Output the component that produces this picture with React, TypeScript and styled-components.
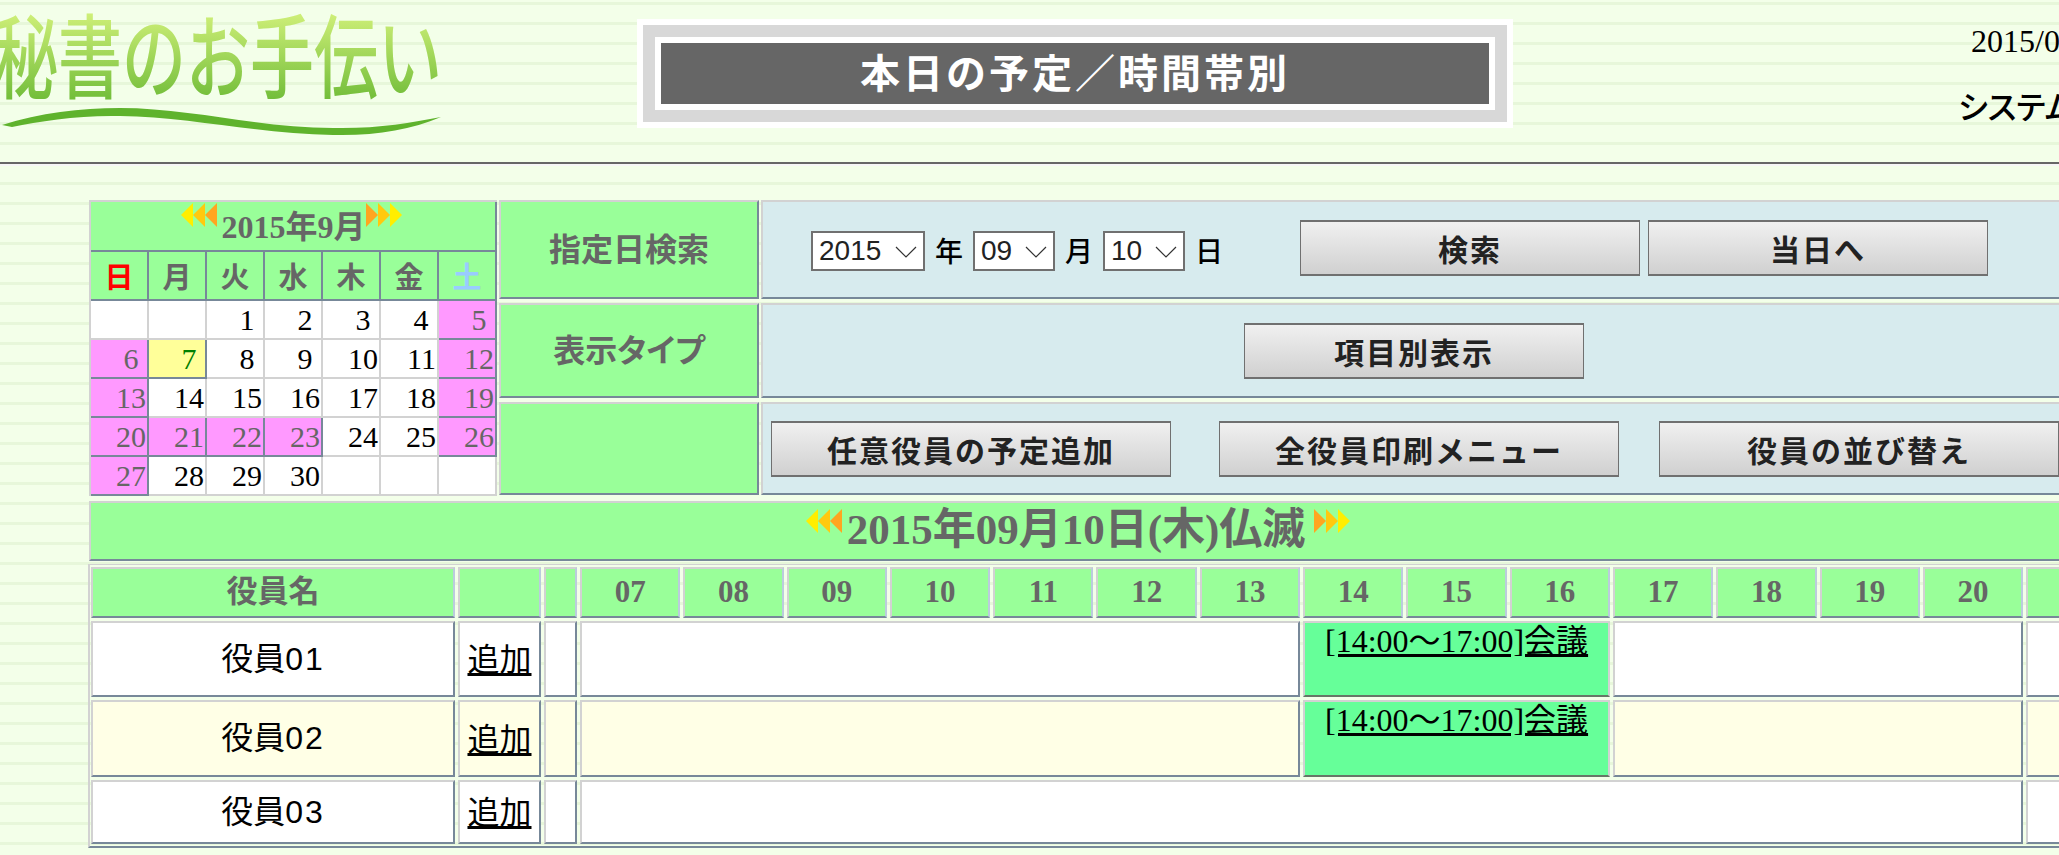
import React from "react";
import styled, { createGlobalStyle } from "styled-components";

const LIGHT = "#d2d2d2";
const SLATE = "#778899";
const GREEN = "#99ff99";
const GRAY = "#666666";
const SERIF = `"Liberation Serif", "Noto Sans CJK JP", serif`;
const GOTHIC = `"Noto Sans CJK JP", "Liberation Sans", sans-serif`;

const Global = createGlobalStyle`
  html, body { margin: 0; padding: 0; overflow: hidden; width: 2059px; height: 855px; }
  body {
    background-color: #f3ffe9;
    background-image: linear-gradient(to bottom, #e7f7da 0, #e7f7da 3px, #f3ffe9 3px, #f3ffe9 20px);
    background-size: 100% 20px;
    background-position: 0 2px;
    font-family: ${SERIF};
    color: #000;
  }
`;

const Page = styled.div`
  width: 2059px;
  height: 855px;
  overflow: hidden;
`;

const Header = styled.header`
  width: 2200px;
  height: 164px;
  box-sizing: border-box;
  border-bottom: 2px solid #666;
  display: flex;
  align-items: flex-start;
  box-shadow: 0 2px 0 #f6f6f6;
`;

const Logo = styled.svg`
  width: 637px;
  height: 162px;
  flex: none;
  display: block;
`;

const TitleFrame = styled.div`
  width: 876px;
  height: 109px;
  margin-top: 19px;
  flex: none;
  box-sizing: border-box;
  border: 6px solid #fff;
  background: #d8d8d8;
  padding: 12px;
`;

const TitleInner = styled.h1`
  margin: 0;
  height: 73px;
  box-sizing: border-box;
  border: 6px solid #fff;
  background: ${GRAY};
  color: #fff;
  font: 700 40px/57px ${GOTHIC};
  letter-spacing: 3px;
  text-align: center;
`;

const Info = styled.div`
  flex: none;
  margin-left: 445px;
  padding-top: 19px;
`;

const DateLine = styled.div`
  margin-left: 13px;
  font: 32px/44px ${SERIF};
  white-space: nowrap;
`;

const UserLine = styled.div`
  margin-top: 20px;
  font: 500 32px/44px ${GOTHIC};
  font-feature-settings: "palt";
  white-space: nowrap;
`;

const Main = styled.main`
  width: 1978px;
  margin: 36px 0 0 89px;
`;

const Top = styled.div`
  display: flex;
  gap: 2px;
`;

const Calendar = styled.div`
  width: 408px;
  flex: none;
  box-sizing: border-box;
  display: grid;
  grid-template-columns: repeat(7, 58px);
  grid-template-rows: 50px 49px repeat(5, 39px);
  border-top: 2px solid ${LIGHT};
  border-left: 2px solid ${LIGHT};
`;

const CalTitle = styled.div`
  grid-column: 1 / -1;
  background: ${GREEN};
  border-right: 2px solid ${SLATE};
  border-bottom: 2px solid ${SLATE};
  display: flex;
  justify-content: center;
  align-items: flex-start;
  padding-top: 1px;
  color: ${GRAY};
  font: 700 32px/46px ${SERIF};
`;

const CalTitleText = styled.span`
  margin: 1px 0 0 1px;
`;

const CalArrow = styled.span`
  flex: none;
  margin-left: -3px;
  margin-right: 3px;
`;

const WeekHead = styled.div<{ $color: string }>`
  background: ${GREEN};
  color: ${(p) => p.$color};
  border-right: 2px solid ${SLATE};
  border-bottom: 2px solid ${SLATE};
  font: 700 29px/47px ${GOTHIC};
  text-align: center;
`;

const dayBg = { blank: "#fff", plain: "#fff", holiday: "#ff99ff", today: "#ffff99" };
const dayFg = { blank: "#000", plain: "#000", holiday: GRAY, today: "#008000" };

const DayCell = styled.div<{ $kind: keyof typeof dayBg }>`
  background: ${(p) => dayBg[p.$kind]};
  color: ${(p) => dayFg[p.$kind]};
  border-right: 2px solid ${(p) => (p.$kind === "holiday" || p.$kind === "today" ? SLATE : LIGHT)};
  border-bottom: 2px solid ${(p) => (p.$kind === "holiday" || p.$kind === "today" ? SLATE : LIGHT)};
  font: 30px/37px ${SERIF};
  text-align: right;
  padding-right: 1px;
  white-space: pre;
`;

const ArrowSvg = styled.svg`
  width: 36px;
  height: 24px;
  flex: none;
  display: block;
`;

const Panels = styled.div`
  flex: 1;
  display: grid;
  grid-template-columns: 260px 1fr;
  grid-template-rows: 99px 95px 93px;
  column-gap: 2px;
  row-gap: 4px;
  height: 295px;
`;

const Label = styled.div`
  background: ${GREEN};
  border: 2px solid ${LIGHT};
  border-right-color: ${SLATE};
  border-bottom-color: ${SLATE};
  color: ${GRAY};
  font: 700 32px/1 ${GOTHIC};
  font-feature-settings: "palt";
  padding-bottom: 5px;
  display: flex;
  align-items: center;
  justify-content: center;
  box-sizing: border-box;
`;

const Content = styled.div<{ $align: string }>`
  background: #d7ebee;
  border: 2px solid ${LIGHT};
  border-right-color: ${SLATE};
  border-bottom-color: ${SLATE};
  box-sizing: border-box;
  display: flex;
  align-items: center;
  justify-content: ${(p) => p.$align};
`;

const SearchForm = styled.form`
  display: flex;
  align-items: center;
  margin: 0;
  padding-left: 48px;
`;

const SelectWrap = styled.span<{ $w: number }>`
  position: relative;
  display: block;
  width: ${(p) => p.$w}px;
  height: 40px;
  margin-top: 2px;
`;

const Select = styled.select`
  appearance: none;
  width: 100%;
  height: 100%;
  box-sizing: border-box;
  border: 2px solid #707070;
  border-radius: 0;
  background: #fff;
  color: #222;
  padding: 0 0 0 6px;
  font: 28px/36px "Liberation Sans", sans-serif;
`;

const Chevron = styled.svg`
  position: absolute;
  right: 8px;
  top: 15px;
  width: 22px;
  height: 12px;
  pointer-events: none;
`;

const Unit = styled.span<{ $w: number }>`
  width: ${(p) => p.$w}px;
  text-align: center;
  font: 500 28px/1 ${GOTHIC};
  flex: none;
`;

const Button = styled.button<{ $w: number }>`
  width: ${(p) => p.$w}px;
  height: 56px;
  flex: none;
  box-sizing: border-box;
  border: 1px solid #707070;
  border-top-width: 2px;
  border-bottom-width: 2px;
  background: linear-gradient(to bottom, #f0f0f0, #d0d0d0);
  color: #222;
  font: 700 30px/1 ${GOTHIC};
  letter-spacing: 2px;
  padding: 0;
`;

const SearchButtons = styled.div`
  display: flex;
  gap: 8px;
  margin-left: 67px;
  margin-top: -4px;
`;

const ActionRow = styled.div`
  display: flex;
  padding-left: 8px;
  gap: 40px;
  > :first-child {
    margin-right: 8px;
  }
`;

const DateBar = styled.div`
  margin-top: 5px;
  height: 60px;
  box-sizing: border-box;
  background: ${GREEN};
  border: 2px solid ${LIGHT};
  border-right-color: ${SLATE};
  border-bottom-color: ${SLATE};
  display: flex;
  justify-content: center;
  align-items: flex-start;
  color: ${GRAY};
  font: 700 43px/53px ${SERIF};
`;

const DateArrow = styled.span`
  margin-top: 6px;
  flex: none;
`;

const DateText = styled.span`
  margin: 0 9px 0 5px;
`;

const Schedule = styled.div`
  margin-top: 3px;
  margin-left: -1px;
  width: 1980px;
  box-sizing: border-box;
  height: 284px;
  border-left: 2px solid ${LIGHT};
  border-top: 1px solid ${LIGHT};
  border-bottom: 2px solid ${SLATE};
  padding: 2px 0 0 1px;
  display: grid;
  grid-template-columns: 364px 83px 33px repeat(14, 100.3px) 42px;
  grid-template-rows: 51px 76px 77px 64px;
  gap: 3px;
`;

const HeadCell = styled.div`
  background: ${GREEN};
  border: 2px solid ${LIGHT};
  border-bottom-color: ${SLATE};
  border-right-color: #bcd;
  box-sizing: border-box;
  color: ${GRAY};
  font: 700 31px/45px ${SERIF};
  text-align: center;
`;

const RowCell = styled.div<{ $alt?: boolean; $span?: number }>`
  background: ${(p) => (p.$alt ? "#ffffe6" : "#fff")};
  border: 2px solid ${LIGHT};
  border-bottom-color: ${SLATE};
  border-right-color: ${SLATE};
  box-sizing: border-box;
  grid-column: span ${(p) => p.$span ?? 1};
  font: 32px/1 ${GOTHIC};
  padding-bottom: 4px;
  display: flex;
  align-items: center;
  justify-content: center;
`;

const NameDigits = styled.span`
  font-family: "Liberation Sans", sans-serif;
  letter-spacing: 2px;
`;

const Link = styled.a`
  color: #000;
  text-decoration: underline;
`;

const EventCell = styled.div`
  grid-column: span 3;
  background: #66ff99;
  border: 2px solid ${LIGHT};
  border-bottom-color: #667766;
  box-sizing: border-box;
  text-align: center;
  font: 32px/36px ${SERIF};
`;

const Arrows = ({ dir }: { dir: "left" | "right" }) => {
  const colors = ["#ffee00", "#ffc90e", "#ffa520"];
  return (
    <ArrowSvg viewBox="0 0 36 24">
      {colors.map((c, i) =>
        dir === "left" ? (
          <polygon key={c} points={`${i * 12},12 ${i * 12 + 12},0 ${i * 12 + 12},24`} fill={c} />
        ) : (
          <polygon key={c} points={`${36 - i * 12},12 ${24 - i * 12},0 ${24 - i * 12},24`} fill={c} />
        )
      )}
    </ArrowSvg>
  );
};

const Chev = () => (
  <Chevron viewBox="0 0 22 12">
    <path d="M1 1 L11 11 L21 1" fill="none" stroke="#333" strokeWidth="1.2" />
  </Chevron>
);

const weeks: [string, string][] = [
  ["日", "#ff0000"],
  ["月", GRAY],
  ["火", GRAY],
  ["水", GRAY],
  ["木", GRAY],
  ["金", GRAY],
  ["土", "#99ccff"],
];

const holidays = new Set([5, 6, 12, 13, 19, 20, 21, 22, 23, 26, 27]);
const cells: (number | null)[] = [null, null, ...Array.from({ length: 30 }, (_, i) => i + 1), null, null, null];
const hours = ["07", "08", "09", "10", "11", "12", "13", "14", "15", "16", "17", "18", "19", "20"];

const Name = ({ n }: { n: string }) => (
  <span>
    役員<NameDigits>{n}</NameDigits>
  </span>
);

const Add = () => <Link href="#">追加</Link>;

const Event = () => (
  <EventCell>
    <Link href="#">[14:00～17:00]会議</Link>
  </EventCell>
);

export default function App() {
  return (
    <Page>
      <Global />
      <Header>
        <Logo viewBox="0 0 637 162">
          <defs>
            <linearGradient id="logoG" x1="0" y1="0" x2="0" y2="1">
              <stop offset="0" stopColor="#ecff8c" />
              <stop offset="1" stopColor="#5fb32d" />
            </linearGradient>
          </defs>
          <text
            x="-6"
            y="64"
            transform="scale(1 1.42)"
            fontFamily={GOTHIC}
            fontWeight="500"
            fontSize="64"
            fill="url(#logoG)"
          >
            秘書のお手伝い
          </text>
          <path
            d="M2 125 C40 113 80 108 120 108 C190 108 260 128 333 128 C375 129 410 123 441 117 C410 130 375 136 333 135 C260 134 190 117 120 116 C80 115 40 121 12 127 Z"
            fill="#5fb32d"
          />
        </Logo>
        <TitleFrame>
          <TitleInner>本日の予定／時間帯別</TitleInner>
        </TitleFrame>
        <Info>
          <DateLine>2015/09/07</DateLine>
          <UserLine>システム管理者</UserLine>
        </Info>
      </Header>
      <Main>
        <Top>
          <Calendar>
            <CalTitle>
              <CalArrow>
                <Arrows dir="left" />
              </CalArrow>
              <CalTitleText>2015年9月</CalTitleText>
              <Arrows dir="right" />
            </CalTitle>
            {weeks.map(([w, c]) => (
              <WeekHead key={w} $color={c}>
                {w}
              </WeekHead>
            ))}
            {cells.map((d, i) => (
              <DayCell
                key={i}
                $kind={d === null ? "blank" : d === 7 ? "today" : holidays.has(d) ? "holiday" : "plain"}
              >
                {d === null ? "" : d < 10 ? `${d}\u00a0` : d}
              </DayCell>
            ))}
          </Calendar>
          <Panels>
            <Label>指定日検索</Label>
            <Content $align="flex-start">
              <SearchForm>
                <SelectWrap $w={114}>
                  <Select defaultValue="2015">
                    <option>2015</option>
                  </Select>
                  <Chev />
                </SelectWrap>
                <Unit $w={48}>年</Unit>
                <SelectWrap $w={82}>
                  <Select defaultValue="09">
                    <option>09</option>
                  </Select>
                  <Chev />
                </SelectWrap>
                <Unit $w={48}>月</Unit>
                <SelectWrap $w={82}>
                  <Select defaultValue="10">
                    <option>10</option>
                  </Select>
                  <Chev />
                </SelectWrap>
                <Unit $w={48}>日</Unit>
                <SearchButtons>
                  <Button type="button" $w={340}>検索</Button>
                  <Button type="button" $w={340}>当日へ</Button>
                </SearchButtons>
              </SearchForm>
            </Content>
            <Label>表示タイプ</Label>
            <Content $align="center">
              <Button type="button" $w={340}>項目別表示</Button>
            </Content>
            <Label />
            <Content $align="flex-start">
              <ActionRow>
                <Button type="button" $w={400}>任意役員の予定追加</Button>
                <Button type="button" $w={400}>全役員印刷メニュー</Button>
                <Button type="button" $w={400}>役員の並び替え</Button>
              </ActionRow>
            </Content>
          </Panels>
        </Top>
        <DateBar>
          <DateArrow>
            <Arrows dir="left" />
          </DateArrow>
          <DateText>2015年09月10日(木)仏滅</DateText>
          <DateArrow>
            <Arrows dir="right" />
          </DateArrow>
        </DateBar>
        <Schedule>
          <HeadCell>役員名</HeadCell>
          <HeadCell />
          <HeadCell />
          {hours.map((h) => (
            <HeadCell key={h}>{h}</HeadCell>
          ))}
          <HeadCell />

          <RowCell><Name n="01" /></RowCell>
          <RowCell><Add /></RowCell>
          <RowCell />
          <RowCell $span={7} />
          <Event />
          <RowCell $span={4} />
          <RowCell />

          <RowCell $alt><Name n="02" /></RowCell>
          <RowCell $alt><Add /></RowCell>
          <RowCell $alt />
          <RowCell $alt $span={7} />
          <Event />
          <RowCell $alt $span={4} />
          <RowCell $alt />

          <RowCell><Name n="03" /></RowCell>
          <RowCell><Add /></RowCell>
          <RowCell />
          <RowCell $span={14} />
          <RowCell />
        </Schedule>
      </Main>
    </Page>
  );
}
